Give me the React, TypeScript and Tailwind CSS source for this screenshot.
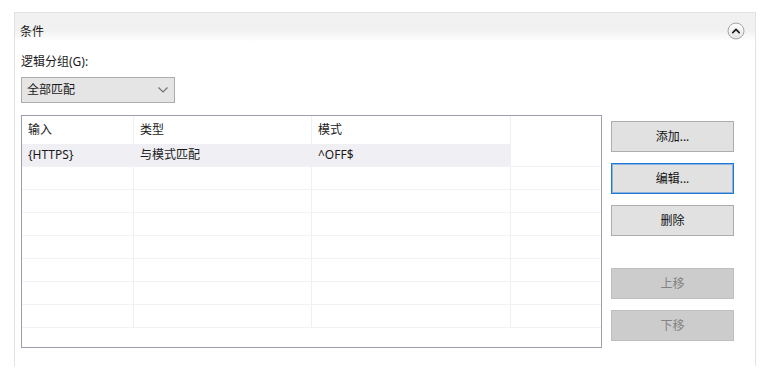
import React from "react";

const font = "font-['Segoe_UI','Noto_Sans','Noto_Sans_CJK_SC',sans-serif]";

function Btn({ label, focused, disabled }: { label: string; focused?: boolean; disabled?: boolean }) {
  const cls = disabled
    ? "bg-[#cccccc] border-[#bfbfbf] text-[#838383]"
    : focused
    ? "bg-[#e1e1e1] border-[#1f78d6] shadow-[inset_0_0_0_1px_rgba(40,125,215,0.45)] text-[#111111]"
    : "bg-[#e1e1e1] border-[#adadad] text-[#111111]";
  return (
    <div className={`w-[123px] h-[31px] border flex items-center justify-center text-[12px] ${cls}`}>
      {label}
    </div>
  );
}

const rows = [
  ["{HTTPS}", "与模式匹配", "^OFF$"],
  ["", "", ""],
  ["", "", ""],
  ["", "", ""],
  ["", "", ""],
  ["", "", ""],
  ["", "", ""],
  ["", "", ""],
];

export default function App() {
  return (
    <div className={`w-[769px] h-[380px] bg-white overflow-hidden pt-[12px] pl-[14px] ${font} text-[#1a1a1a]`}>
      <div className="w-[742px] h-[354px] border-l border-t border-r border-[#e2e2e2] flex flex-col">
        <div className="h-[36px] flex items-center justify-between pl-[5px] pr-[10px] bg-[linear-gradient(to_bottom,#f1f1f1_0%,#f1f1f1_48%,#ffffff_80%)]">
          <span className="text-[12px] leading-none mt-[1px]">条件</span>
          <svg width="18" height="18" viewBox="0 0 18 18">
            <defs>
              <linearGradient id="cg" x1="0" y1="0" x2="0" y2="1">
                <stop offset="0" stopColor="#ffffff" />
                <stop offset="1" stopColor="#e2e2e2" />
              </linearGradient>
            </defs>
            <circle cx="9" cy="9" r="8" fill="url(#cg)" stroke="#a5a5a5" strokeWidth="1" />
            <path d="M5.8 10.6 L9 7.4 L12.2 10.6" fill="none" stroke="#222" strokeWidth="1.8" strokeLinecap="round" strokeLinejoin="round" />
          </svg>
        </div>
        <div className="pl-[6px] flex flex-col">
          <div className="h-[20px] mt-[3px] flex items-center text-[12px]">逻辑分组(G):</div>
          <div className="mt-[5px] w-[154px] h-[26px] bg-[#e5e5e5] border border-[#adadad] flex items-center justify-between pl-[5px] pr-[5px] text-[12px]">
            <span>全部匹配</span>
            <svg width="12" height="8" viewBox="0 0 12 8">
              <path d="M1.5 1.5 L6 6 L10.5 1.5" fill="none" stroke="#707070" strokeWidth="1.1" />
            </svg>
          </div>
          <div className="mt-[12px] flex">
            <div className="w-[581px] h-[233px] border border-[#9d9dab] bg-white overflow-hidden">
              <div className="flex h-[28px] text-[12px]">
                <div className="w-[112px] pl-[6px] flex items-center border-r border-[#f0eff3]">输入</div>
                <div className="w-[178px] pl-[6px] flex items-center border-r border-[#f0eff3]">类型</div>
                <div className="w-[199px] pl-[6px] flex items-center border-r border-[#f0eff3]">模式</div>
                <div className="flex-1"></div>
              </div>
              {rows.map((r, i) => (
                <div key={i} className="flex h-[23px] text-[12px] border-b border-[#f2f1f4]">
                  <div className={`w-[112px] pl-[6px] flex items-center border-r border-[#f0eff3] ${i === 0 ? "bg-[#f0eff3]" : ""}`}>{r[0]}</div>
                  <div className={`w-[178px] pl-[6px] flex items-center border-r border-[#f0eff3] ${i === 0 ? "bg-[#f0eff3]" : ""}`}>{r[1]}</div>
                  <div className={`w-[199px] pl-[6px] flex items-center border-r border-[#f0eff3] ${i === 0 ? "bg-[#f0eff3]" : ""}`}>{r[2]}</div>
                  <div className="flex-1"></div>
                </div>
              ))}
            </div>
            <div className="ml-[9px] mt-[6px] flex flex-col">
              <Btn label="添加..." />
              <div className="mt-[11px]"><Btn label="编辑..." focused /></div>
              <div className="mt-[11px]"><Btn label="删除" /></div>
              <div className="mt-[32px]"><Btn label="上移" disabled /></div>
              <div className="mt-[11px]"><Btn label="下移" disabled /></div>
            </div>
          </div>
        </div>
      </div>
    </div>
  );
}
